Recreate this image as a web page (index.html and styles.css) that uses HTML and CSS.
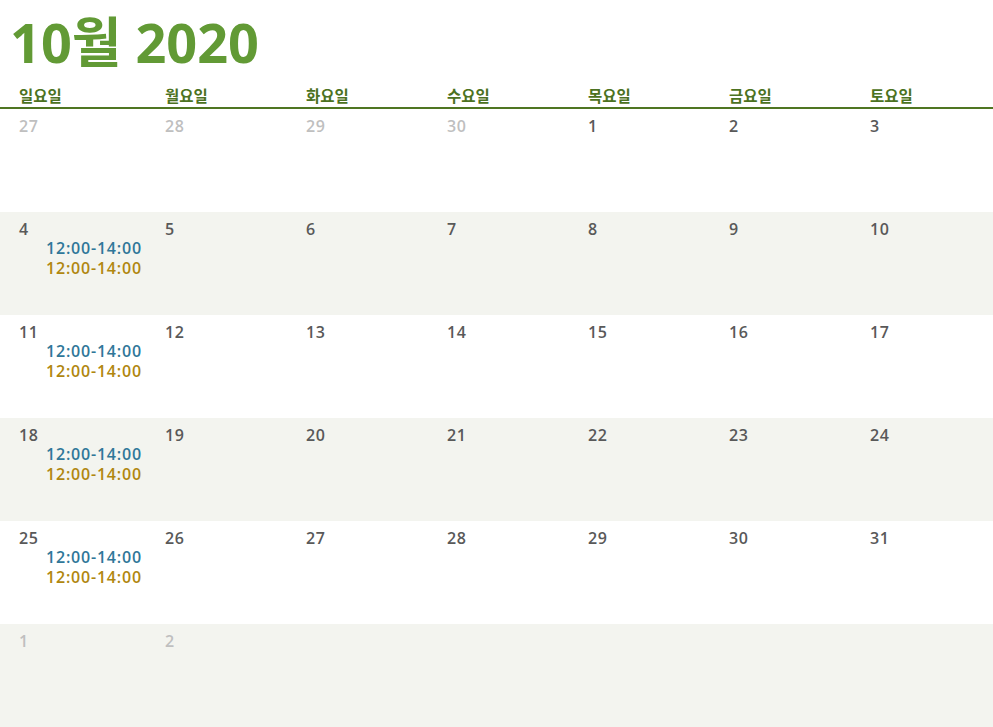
FILE: index.html
```html
<!DOCTYPE html>
<html lang="ko">
<head>
<meta charset="utf-8">
<title>10월 2020</title>
<link rel="stylesheet" href="styles.css">
</head>
<body>
<div class="page">
  <h1 class="title">10월 2020</h1>
  <div class="grid dow">
    <div class="cell">일요일</div>
    <div class="cell">월요일</div>
    <div class="cell">화요일</div>
    <div class="cell">수요일</div>
    <div class="cell">목요일</div>
    <div class="cell">금요일</div>
    <div class="cell">토요일</div>
  </div>
  <div class="grid week">
    <div class="cell"><span class="num dim">27</span></div>
    <div class="cell"><span class="num dim">28</span></div>
    <div class="cell"><span class="num dim">29</span></div>
    <div class="cell"><span class="num dim">30</span></div>
    <div class="cell"><span class="num">1</span></div>
    <div class="cell"><span class="num">2</span></div>
    <div class="cell"><span class="num">3</span></div>
  </div>
  <div class="grid week alt">
    <div class="cell"><span class="num">4</span><div class="ev blue">12:00-14:00</div><div class="ev gold">12:00-14:00</div></div>
    <div class="cell"><span class="num">5</span></div>
    <div class="cell"><span class="num">6</span></div>
    <div class="cell"><span class="num">7</span></div>
    <div class="cell"><span class="num">8</span></div>
    <div class="cell"><span class="num">9</span></div>
    <div class="cell"><span class="num">10</span></div>
  </div>
  <div class="grid week">
    <div class="cell"><span class="num">11</span><div class="ev blue">12:00-14:00</div><div class="ev gold">12:00-14:00</div></div>
    <div class="cell"><span class="num">12</span></div>
    <div class="cell"><span class="num">13</span></div>
    <div class="cell"><span class="num">14</span></div>
    <div class="cell"><span class="num">15</span></div>
    <div class="cell"><span class="num">16</span></div>
    <div class="cell"><span class="num">17</span></div>
  </div>
  <div class="grid week alt">
    <div class="cell"><span class="num">18</span><div class="ev blue">12:00-14:00</div><div class="ev gold">12:00-14:00</div></div>
    <div class="cell"><span class="num">19</span></div>
    <div class="cell"><span class="num">20</span></div>
    <div class="cell"><span class="num">21</span></div>
    <div class="cell"><span class="num">22</span></div>
    <div class="cell"><span class="num">23</span></div>
    <div class="cell"><span class="num">24</span></div>
  </div>
  <div class="grid week">
    <div class="cell"><span class="num">25</span><div class="ev blue">12:00-14:00</div><div class="ev gold">12:00-14:00</div></div>
    <div class="cell"><span class="num">26</span></div>
    <div class="cell"><span class="num">27</span></div>
    <div class="cell"><span class="num">28</span></div>
    <div class="cell"><span class="num">29</span></div>
    <div class="cell"><span class="num">30</span></div>
    <div class="cell"><span class="num">31</span></div>
  </div>
  <div class="grid week alt">
    <div class="cell"><span class="num dim">1</span></div>
    <div class="cell"><span class="num dim">2</span></div>
    <div class="cell"></div>
    <div class="cell"></div>
    <div class="cell"></div>
    <div class="cell"></div>
    <div class="cell"></div>
  </div>
</div>
</body>
</html>
```

FILE: styles.css
```css
html, body {
  margin: 0;
  padding: 0;
  background: #ffffff;
}
body {
  width: 993px;
  height: 727px;
  overflow: hidden;
  font-family: "Open Sans", "Noto Sans CJK KR", sans-serif;
}
.page {
  width: 1011px;
}
.title {
  margin: 0;
  padding: 15px 0 0 10px;
  height: 54px;
  font-size: 54px;
  line-height: 54px;
  font-weight: 700;
  color: #629a35;
}
.grid {
  display: grid;
  grid-template-columns: 165px repeat(6, 141px);
}
.grid .cell:first-child {
  padding-left: 19px;
}
.dow {
  height: 38px;
  align-items: end;
  border-bottom: 2px solid #4f7522;
  width: 993px;
}
.dow .cell {
  font-family: "Noto Sans CJK KR", sans-serif;
  font-size: 15.5px;
  font-weight: 700;
  color: #4c7222;
  line-height: 20px;
  padding-bottom: 2px;
}
.week {
  height: 103px;
}
.week.alt {
  background: #f3f4ef;
}
.week .cell {
  padding-top: 7px;
}
.num {
  display: block;
  font-size: 16px;
  font-weight: 600;
  color: #595959;
  line-height: 20px;
  letter-spacing: 0.5px;
}
.num.dim {
  color: #bfbfbf;
}
.ev {
  margin-left: 27px;
  font-size: 16px;
  font-weight: 600;
  line-height: 20px;
  letter-spacing: 0.8px;
}
.num + .ev {
  margin-top: -1px;
}
.ev.blue {
  color: #2f7799;
}
.ev.gold {
  color: #b0870f;
}
```
